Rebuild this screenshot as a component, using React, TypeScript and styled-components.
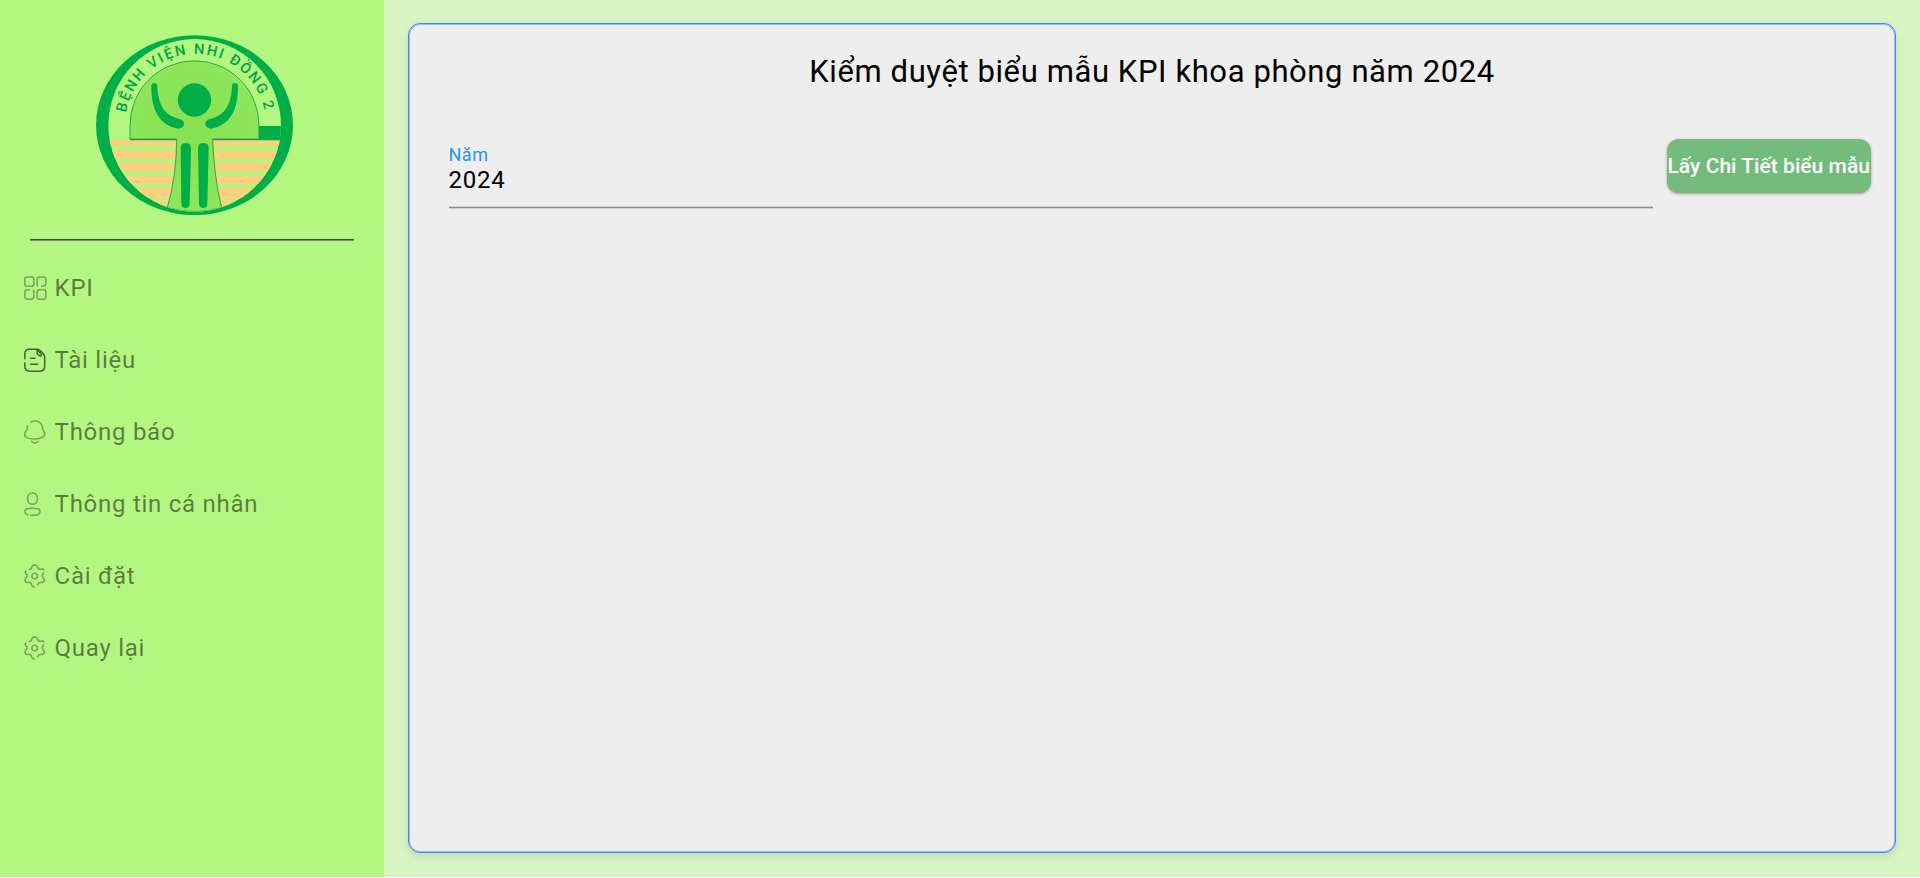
import React from "react";
import styled, { createGlobalStyle } from "styled-components";

const GlobalStyle = createGlobalStyle`
  * { box-sizing: border-box; }
  body { margin: 0; background: #fff; font-family: Roboto, "Liberation Sans", sans-serif; overflow: hidden; }
`;

const Page = styled.div`
  display: flex;
  height: 877px;
`;

const Sidebar = styled.aside`
  display: flex;
  flex-direction: column;
  flex: 0 0 384px;
  background: #b3f781;
`;

const LogoArea = styled.div`
  height: 239px;
  padding: 34.5px 0 0 96px;

  svg { display: block; }
`;

const Divider = styled.div`
  height: 2px;
  margin: 0 30px;
  background: linear-gradient(#464b3f 50%, #7a8d6b 50%);
`;

const Menu = styled.nav`
  display: flex;
  flex-direction: column;
  padding: 11px 0 0 24px;
`;

const MenuItem = styled.a`
  display: flex;
  align-items: center;
  height: 72px;
`;

const IconSlot = styled.span<{ $strong?: boolean }>`
  display: flex;
  width: 30.6px;
  color: ${(p) => (p.$strong ? "rgba(0,0,0,0.6)" : "rgba(0,0,0,0.34)")};
`;

const MenuLabel = styled.span`
  font-size: 24px;
  font-weight: 400;
  letter-spacing: 0.73px;
  white-space: nowrap;
  color: rgba(0, 0, 0, 0.51);
`;

const Main = styled.main`
  flex: 1;
  min-width: 0;
  padding: 23px 24px 24px;
  background: #d9f5c3;
`;

const Card = styled.section`
  height: 830px;
  padding: 26px 24.5px 0 39.5px;
  border: 1px solid #4086ff;
  border-radius: 12px;
  background: #eee;
  box-shadow: inset 0 0 0 1px #96b9fa, 0 4px 8px rgba(0, 0, 0, 0.1);
`;

const Title = styled.h1`
  margin: 0 0 0 -15px;
  height: 44px;
  line-height: 44px;
  text-align: center;
  font-size: 31px;
  font-weight: 400;
  letter-spacing: 0.6px;
  color: #000;
`;

const FormRow = styled.div`
  display: flex;
  align-items: flex-start;
  gap: 14.5px;
  margin-top: 44px;
`;

const Field = styled.label`
  flex: 1;
  display: flex;
  flex-direction: column;
  height: 70px;
  padding-top: 6px;
  border-bottom: 1px solid #8e8e93;
  box-shadow: 0 1px 0 #cfcfd1, inset 0 -1px 0 #cfcfd1;
`;

const FieldLabel = styled.span`
  height: 22px;
  line-height: 22px;
  font-size: 18px;
  letter-spacing: 0.5px;
  color: #2196f3;
`;

const FieldValue = styled.span`
  line-height: 28px;
  font-size: 24px;
  letter-spacing: 0.75px;
  color: #000;
`;

const ActionButton = styled.button`
  width: 203.5px;
  height: 54px;
  margin-top: 0.5px;
  padding: 0;
  border: 0;
  border-radius: 12px;
  background: #73bb7d;
  color: #fff;
  font: 500 21px Roboto, sans-serif;
  letter-spacing: 0.04px;
  text-align: center;
  white-space: nowrap;
  box-shadow: 0 1px 3px rgba(0, 0, 0, 0.35);
`;

const stroke = { fill: "none", stroke: "currentColor", strokeWidth: 4.6, strokeLinecap: "round" as const };

const GridIcon = () => (
  <svg width="22.7" height="24" viewBox="41 169 68 72" {...stroke}>
    <rect x="43.5" y="172" width="27" height="28" rx="7" />
    <path d="M80.500 199V180Q80.500 172 88 172H99Q106.500 172 106.500 180V192Q106.500 200 94 200" />
    <path d="M57 210H51Q43.500 210 43.500 218V230Q43.500 238.500 51 238.500H63Q70.500 238.500 70.500 230V211" />
    <rect x="80.500" y="210" width="26" height="28.500" rx="7" />
  </svg>
);

const DocumentIcon = () => (
  <svg width="21.7" height="24" viewBox="41 385 65 72" {...stroke}>
    <path d="M43.500 417V402Q43.500 388.500 57 388.500H81Q86 388.500 90 393L99 402Q103 407 103 412V440Q103 454.500 89 454.500H58Q43.500 454.500 43.500 440V430" />
    <path d="M80.500 390V400Q81 408 92 409M84 394L94 405M61 416H74M61 434H82" />
  </svg>
);

const BellIcon = () => (
  <svg width="21.7" height="24" viewBox="41 91 65 72" {...stroke}>
    <path d="M61 97Q73 92 84 96Q94 101 96 111Q96 119 101 126Q106 137 98 142Q87 148 73 148Q55 148 47 142Q40 136 45 127Q52 119 52 108" />
    <path d="M64 155Q67 160 74 160Q80 160 83 155" />
  </svg>
);

const UserIcon = () => (
  <svg width="17" height="24" viewBox="41 307 51 72" {...stroke}>
    <rect x="52" y="310" width="29" height="34" rx="14.500" />
    <path d="M52 376C42 373 42 361 48 358Q66 353 84 358C91 361 91 373 82 375Q72 378 61 376" />
  </svg>
);

const GearIcon = () => (
  <svg width="21.700" height="24" viewBox="41 73 65 72" {...stroke}>
    <circle cx="73" cy="109" r="8.500" />
    <path d="M56 89Q63 91 64 83Q65 76 73 76Q80 76 82 83Q83 90 91 89Q98 87 101 91" />
    <path d="M46 94Q43 98 47 102Q54 109 47 115Q42 120 45 125Q48 130 54 128Q62 127 64 136Q66 142 72 142" />
    <path d="M100 99Q93 107 98 114Q105 119 101 125Q98 130 92 128Q84 127 82 136" />
  </svg>
);

const stripes = [
  [360, 16], [390, 25], [428, 25], [466, 25], [503, 31], [541, 40],
];

const armPath =
  "M214 198Q214 188 223 188Q232 188 232 198C234 253 253 286 298 296Q312 300 312 312Q309 325 294 325C240 316 213 270 214 198Z";

const HospitalLogo = () => (
  <svg width="197" height="180.300" viewBox="48 44 591 541">
    <defs>
      <clipPath id="disc"><circle cx="344" cy="315" r="259" /></clipPath>
      <radialGradient id="leaf"><stop offset="0" stopColor="#86e150" /><stop offset="1" stopColor="#8ee55a" /></radialGradient>
      <path id="nameArc" d="M138 277A211.500 211.500 0 0 1 555 277" />
    </defs>
    <ellipse cx="343.500" cy="314.500" rx="295.500" ry="270" fill="#00ae47" />
    <circle cx="344" cy="315" r="259" fill="#b3f781" />
    <g clipPath="url(#disc)">
      {stripes.map(([y, h]) => <rect key={y} x="80" y={y} width="530" height={h} fill="#ffcf80" />)}
      <rect x="537" y="317" width="70" height="43" fill="#00ae47" />
      <path
        d="M150 357V315A193.500 193.500 0 0 1 537 315V357H398Q402 470 425 562Q344 586 262 562Q290 465 290 357Z"
        fill="url(#leaf)" stroke="#129c48" strokeWidth="2.500"
      />
      <path d="M150 357.500H290M398 357.500H537" stroke="#129c48" strokeWidth="4" />
    </g>
    <g fill="#00ae47">
      <circle cx="343.500" cy="239" r="50" />
      <path d={armPath} />
      <path d={armPath} transform="matrix(-1 0 0 1 688 0)" />
      <path d="M302 384Q302 368 317.500 368Q333 368 333 384L329 551Q328 563 317 563Q305 563 304 551Z" />
      <path d="M354 384Q354 368 369.500 368Q386 368 386 384L382 551Q381 563 370 563Q358 563 357 551Z" />
    </g>
    <text fill="#00a346" fontFamily="Roboto, sans-serif" fontSize="44" fontWeight="500" textLength="585">
      <textPath href="#nameArc" textLength="585">BỆNH VIỆN NHI ĐỒNG 2</textPath>
    </text>
  </svg>
);

const menu = [
  { label: "KPI", Icon: GridIcon },
  { label: "Tài liệu", Icon: DocumentIcon, strong: true },
  { label: "Thông báo", Icon: BellIcon },
  { label: "Thông tin cá nhân", Icon: UserIcon },
  { label: "Cài đặt", Icon: GearIcon },
  { label: "Quay lại", Icon: GearIcon },
];

export default function App() {
  return (
    <>
      <GlobalStyle />
      <Page>
        <Sidebar>
          <LogoArea><HospitalLogo /></LogoArea>
          <Divider />
          <Menu>
            {menu.map(({ label, Icon, strong }) => (
              <MenuItem key={label}>
                <IconSlot $strong={strong}><Icon /></IconSlot>
                <MenuLabel>{label}</MenuLabel>
              </MenuItem>
            ))}
          </Menu>
        </Sidebar>
        <Main>
          <Card>
            <Title>Kiểm duyệt biểu mẫu KPI khoa phòng năm 2024</Title>
            <FormRow>
              <Field>
                <FieldLabel>Năm</FieldLabel>
                <FieldValue>2024</FieldValue>
              </Field>
              <ActionButton>Lấy Chi Tiết biểu mẫu</ActionButton>
            </FormRow>
          </Card>
        </Main>
      </Page>
    </>
  );
}
